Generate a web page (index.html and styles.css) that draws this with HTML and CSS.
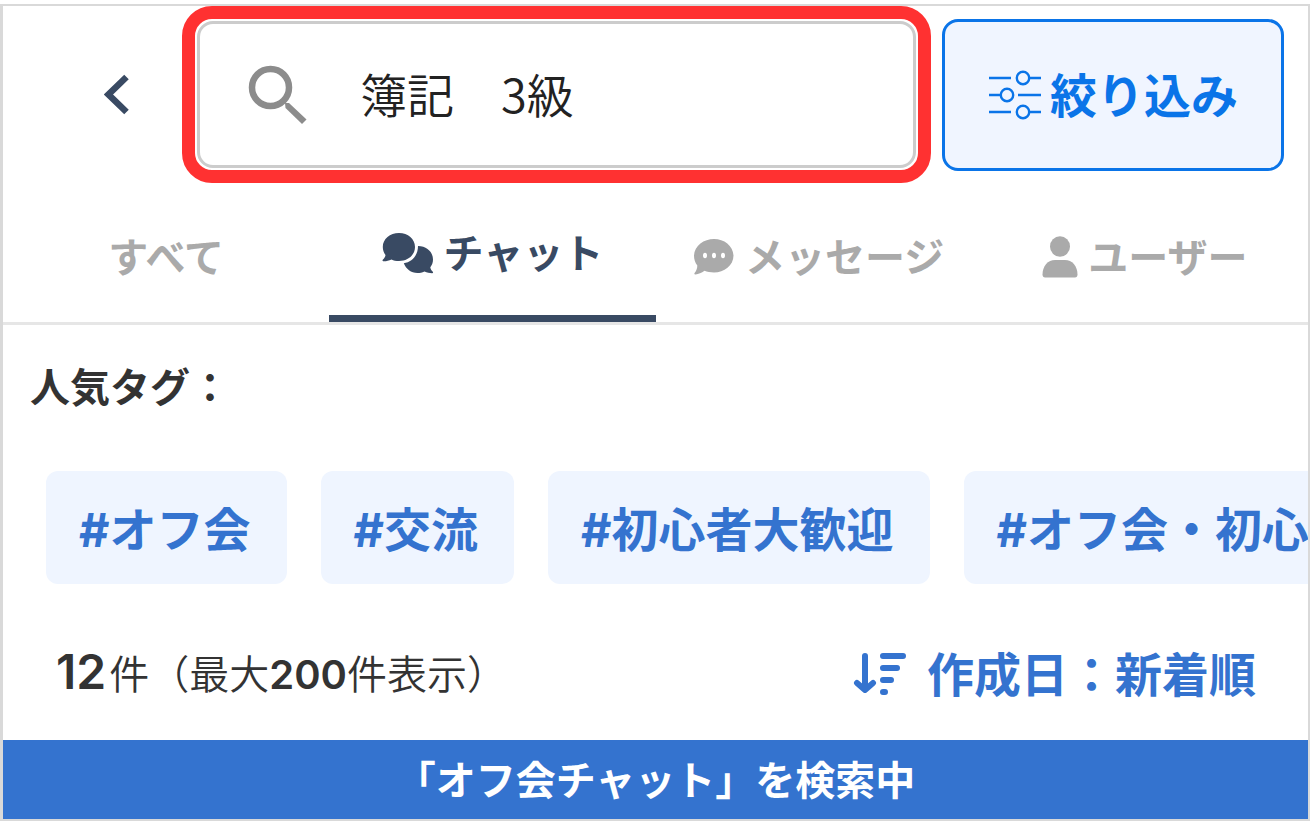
FILE: index.html
```html
<!DOCTYPE html>
<html lang="ja">
<head>
<meta charset="utf-8">
<meta name="viewport" content="width=device-width, initial-scale=1">
<title>チャット検索</title>
<link rel="stylesheet" href="styles.css">
</head>
<body>
<main class="screen">
  <header class="toolbar">
    <button class="back" type="button" aria-label="戻る">
      <svg width="26" height="42" viewBox="0 0 26 42"><path d="M22.500 3 L4.500 20.500 L22.500 38" fill="none" stroke="currentColor" stroke-width="6.500"/></svg>
    </button>
    <div class="highlight">
      <label class="search">
        <svg class="search-icon" width="60" height="60" viewBox="0 0 60 60" aria-hidden="true">
          <circle cx="22.500" cy="22.500" r="18.500" fill="none" stroke="currentColor" stroke-width="6.500"/>
          <path d="M37 38 L41 38 L58.500 54.500 L54 59 L37.500 43 Z" fill="currentColor"/>
        </svg>
        <input class="search-input" type="text" aria-label="検索" value="簿記　3級">
      </label>
    </div>
    <button class="filter" type="button">
      <svg width="54" height="50" viewBox="0 0 54 50" fill="none" stroke="currentColor" stroke-width="2.400" aria-hidden="true">
        <path d="M1 8H23M41 8H53M1 25H12M30 25H53M1 42H23M41 42H53"/>
        <circle cx="35" cy="8" r="6.200"/><circle cx="19" cy="25" r="6.200"/><circle cx="35" cy="42" r="6.200"/>
      </svg>
      <span>絞り込み</span>
    </button>
  </header>

  <nav class="tabs">
    <a class="tab" href="#all">すべて</a>
    <a class="tab tab-active" href="#chat" aria-current="page">
      <svg width="52" height="42" viewBox="0 0 52 42" fill="currentColor" aria-hidden="true">
        <path d="M17 1C26 1 33 7 33 15S26 29 17 29C14 29 11.500 28.500 9.500 27.500C6.500 28.800 3.500 29.500 1 29.200C.2 29 .4 28.200 1 27.600C2.500 26 3.300 24.500 3.500 23C1.800 20.800 .8 18 .8 15C.8 7 8 1 17 1Z"/>
        <path d="M36 14C45 14.300 51 20 51 27.500C51 30.500 50 33 48.300 35.200C48.500 37 49.500 38.500 50.800 39.800C51.400 40.500 51 41.300 50 41.200C47.500 41.200 45 40.600 42.500 39.500C40 40.600 38 41 35.500 41C29 41 24 37 21.800 31.300C30 30 36 23.500 36 14Z"/>
      </svg>
      <span>チャット</span>
    </a>
    <a class="tab" href="#message">
      <svg width="42" height="38" viewBox="0 0 42 38" aria-hidden="true">
        <path d="M21 1C31 1 40 7.500 40.500 17.500C40.500 27.500 31 34.500 21 34.500C17.500 34.500 14 34 11.500 32.800C8.500 35 5.500 36.300 2.500 36.500C1.300 36.600 1 35.800 1.600 35C3.500 32.500 4.300 30 4.300 27.500C2 24.800 1 21 1 17.500C1.500 7.500 11 1 21 1Z" fill="currentColor"/>
        <g fill="#fff"><ellipse cx="12" cy="17.500" rx="2" ry="2.800"/><ellipse cx="21" cy="17.500" rx="2" ry="2.800"/><ellipse cx="30" cy="17.500" rx="2" ry="2.800"/></g>
      </svg>
      <span>メッセージ</span>
    </a>
    <a class="tab" href="#user">
      <svg width="36" height="42" viewBox="0 0 36 42" fill="currentColor" aria-hidden="true">
        <ellipse cx="18" cy="10.500" rx="10" ry="10.300"/>
        <path d="M13 24H23C30 24 35.500 30 35.500 38.500C35.500 40.500 34.500 41.500 33 41.500H3C1.500 41.500 .5 40.500 .5 38.500C.5 30 6 24 13 24Z"/>
      </svg>
      <span>ユーザー</span>
    </a>
  </nav>

  <section class="popular">
    <h2 class="popular-title">人気タグ：</h2>
    <div class="tags">
      <a class="tag" href="#t1">#オフ会</a>
      <a class="tag" href="#t2">#交流</a>
      <a class="tag" href="#t3">#初心者大歓迎</a>
      <a class="tag" href="#t4">#オフ会・初心</a>
    </div>
  </section>

  <div class="summary">
    <p class="count"><strong class="total">12</strong>件（最大<strong>200</strong>件表示）</p>
    <button class="sort" type="button">
      <svg width="54" height="44" viewBox="0 0 54 44" fill="none" stroke="currentColor" stroke-width="6" stroke-linecap="round" stroke-linejoin="round" aria-hidden="true">
        <path d="M12 4V37M4 31L12 38L20 31M30 4H50M30 16H44M30 28H38M30 40H32"/>
      </svg>
      <span>作成日：新着順</span>
    </button>
  </div>

  <p class="banner" role="status">「オフ会チャット」を検索中</p>
</main>
</body>
</html>
```

FILE: styles.css
```css
* { box-sizing: border-box; }

body {
  margin: 0;
  padding: 4px 3px 0 0;
  background: #fff;
  color: #333;
  font-family: "Noto Sans", "Noto Sans CJK JP", sans-serif;
}

svg { display: block; flex: none; }

button {
  font: inherit;
  cursor: pointer;
}

.screen {
  display: flex;
  flex-direction: column;
  border: 2px solid #d9d9d9;
  border-left-width: 3px;
  overflow: hidden;
}

.toolbar {
  display: flex;
  align-items: flex-start;
  padding-right: 24px;
}

.back {
  display: flex;
  flex: none;
  align-self: center;
  justify-content: center;
  width: 76px;
  margin: 0 27px 0 76px;
  padding: 0;
  border: 0;
  background: none;
  color: #394a63;
}

.highlight {
  flex: 1;
  min-width: 0;
  padding: 2px;
  border: 13px solid #ff3131;
  border-radius: 30px;
}

.search {
  display: flex;
  align-items: center;
  gap: 52px;
  height: 147px;
  padding: 0 24px 0 48px;
  border: 3px solid #ccc;
  border-radius: 16px;
}

.search-icon { color: #8c8c8c; }

.search-input {
  flex: 1;
  min-width: 0;
  padding: 0 0 4px;
  border: 0;
  outline: 0;
  background: none;
  color: #222;
  font-family: "Noto Sans CJK JP", sans-serif;
  font-size: 47px;
  font-weight: 350;
  line-height: 64px;
}

.filter {
  display: flex;
  flex: none;
  align-items: center;
  justify-content: center;
  gap: 8px;
  width: 342px;
  height: 152px;
  margin: 13px 0 0 11px;
  padding: 0;
  border: 3px solid #0a74e8;
  border-radius: 16px;
  background: #f0f5ff;
  color: #0a74e8;
  font-size: 47px;
  font-weight: 600;
  line-height: 64px;
  white-space: nowrap;
}

.tabs {
  display: grid;
  grid-template-columns: repeat(4, 1fr);
  border-bottom: 3px solid #e6e6e6;
}

.tab {
  display: flex;
  align-items: center;
  justify-content: center;
  gap: 10px;
  height: 139px;
  padding-top: 8px;
  color: #aaa;
  font-size: 40px;
  font-weight: 600;
  line-height: 56px;
  text-decoration: none;
}

.tab-active {
  border-bottom: 7px solid #394a63;
  color: #394a63;
}

.popular { padding-top: 34px; }

.popular-title {
  margin: 0 0 0 27px;
  font-size: 40px;
  font-weight: 600;
  line-height: 56px;
}

.tags {
  display: flex;
  gap: 34px;
  margin-top: 56px;
  padding-left: 43px;
  overflow: hidden;
}

.tag {
  flex: none;
  padding: 26px 36px 22px 33px;
  border-radius: 12px;
  background: #eff5ff;
  color: #3473cf;
  font-family: Inter, "Noto Sans CJK JP", sans-serif;
  font-size: 47px;
  font-weight: 700;
  line-height: 65px;
  text-decoration: none;
}

.summary {
  display: flex;
  align-items: center;
  justify-content: space-between;
  padding: 56px 52px 33px 53px;
}

.count {
  margin: 0;
  font-family: Inter, "Noto Sans CJK JP", sans-serif;
  font-size: 40px;
  font-weight: 350;
  line-height: 64px;
}

.count strong { font-weight: 600; }

.count .total {
  margin-right: 3px;
  font-size: 48px;
}

.sort {
  display: flex;
  align-items: center;
  gap: 20px;
  padding: 0;
  border: 0;
  background: none;
  color: #3473cf;
  font-size: 47px;
  font-weight: 600;
  line-height: 64px;
}

.banner {
  margin: 0;
  padding: 12px 0;
  background: #3473cf;
  color: #fff;
  font-size: 40px;
  font-weight: 700;
  line-height: 55px;
  text-align: center;
}
```
